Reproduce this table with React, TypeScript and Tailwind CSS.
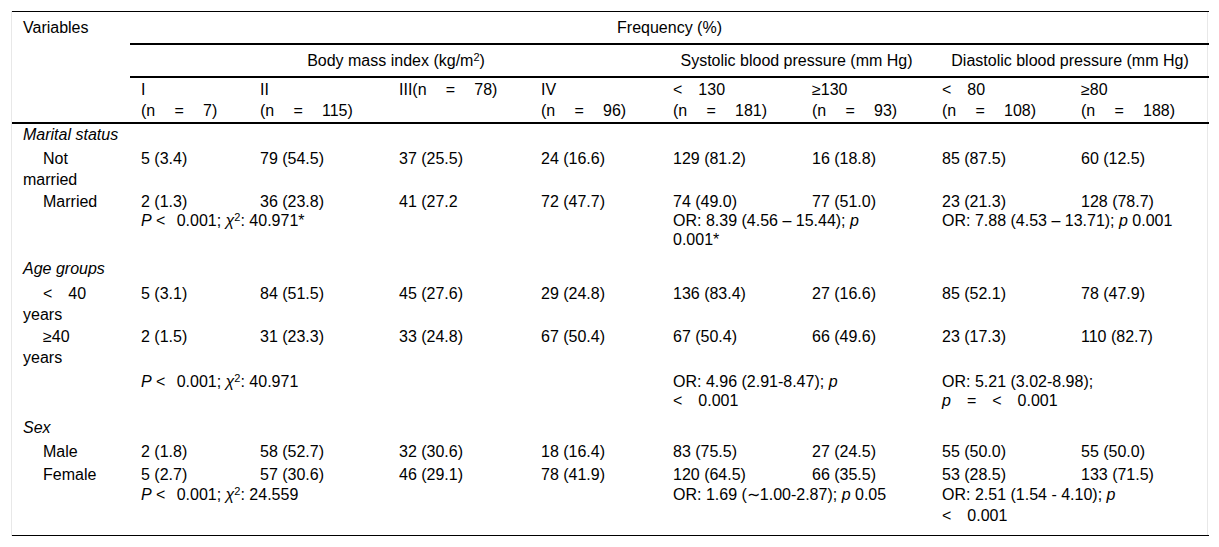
const EM = '\u2003';
const GAP = '\u2002\u2009';
const NGAP = '\u2003\u2009';

type Row = { label: React.ReactNode; values: string[]; pad?: string };

function Sup({ children }: { children: React.ReactNode }) {
  return <sup className="text-[11px]">{children}</sup>;
}

function Chi({ value }: { value: string }) {
  return (
    <>
      <i>P</i> &lt;{GAP}0.001; <i>χ</i>
      <Sup>2</Sup>: {value}
    </>
  );
}

function GroupHead({ title, pad = 'pt-0 pb-[2px]' }: { title: string; pad?: string }) {
  return (
    <tr>
      <td colSpan={9} className={`pl-[11px] italic ${pad}`}>
        {title}
      </td>
    </tr>
  );
}

function DataRow({ label, values, pad = 'pt-[3px] pb-[2px]' }: Row) {
  return (
    <tr>
      <td className={`pl-[11px] pr-2 indent-5 ${pad}`}>{label}</td>
      {values.map((v, i) => (
        <td key={i} className={`pl-[11px] ${pad}`}>
          {v}
        </td>
      ))}
    </tr>
  );
}

function StatRow({
  chi,
  sys,
  dia,
  pad,
}: {
  chi: React.ReactNode;
  sys: React.ReactNode;
  dia: React.ReactNode;
  pad: string;
}) {
  return (
    <tr>
      <td className={pad} />
      <td colSpan={4} className={`pl-[11px] ${pad}`}>
        {chi}
      </td>
      <td colSpan={2} className={`pl-[11px] ${pad}`}>
        {sys}
      </td>
      <td colSpan={2} className={`pl-[11px] ${pad}`}>
        {dia}
      </td>
    </tr>
  );
}

const nHeads: React.ReactNode[] = [
  <>I<br />(n{NGAP}={NGAP}7)</>,
  <>II<br />(n{NGAP}={NGAP}115)</>,
  <>III(n{NGAP}={NGAP}78)</>,
  <>IV<br />(n{NGAP}={NGAP}96)</>,
  <>&lt;{EM}130<br />(n{NGAP}={NGAP}181)</>,
  <>≥130<br />(n{NGAP}={NGAP}93)</>,
  <>&lt;{EM}80<br />(n{NGAP}={NGAP}108)</>,
  <>≥80<br />(n{NGAP}={NGAP}188)</>,
];

const widths = [118, 119, 139, 142, 132, 139, 130, 139, 139];

export default function App() {
  return (
    <div className="bg-white min-h-[547px] pt-[11px] text-black text-[16px] leading-[19px] font-['Liberation_Sans',Arial,sans-serif]">
      <div className="ml-[11px] w-[1197px] border-x border-[#e8e8e8]">
        <table className="w-full table-fixed border-separate border-spacing-0 border-t border-b border-black text-left">
          <colgroup>
            {widths.map((w, i) => (
              <col key={i} style={{ width: w }} />
            ))}
          </colgroup>
          <thead>
            <tr>
              <th
                rowSpan={3}
                className="align-top font-normal pl-[11px] pt-[6px] border-b-2 border-black"
              >
                Variables
              </th>
              <th colSpan={8} className="font-normal text-center pt-[6px] pb-[6px] border-b-2 border-black">
                Frequency (%)
              </th>
            </tr>
            <tr>
              <th colSpan={4} className="font-normal text-center pt-[6px] pb-[6px] border-b-2 border-black">
                Body mass index (kg/m<Sup>2</Sup>)
              </th>
              <th colSpan={2} className="font-normal text-center pt-[6px] pb-[6px] border-b-2 border-black">
                Systolic blood pressure (mm Hg)
              </th>
              <th colSpan={2} className="font-normal text-center pt-[6px] pb-[6px] border-b-2 border-black">
                Diastolic blood pressure (mm Hg)
              </th>
            </tr>
            <tr>
              {nHeads.map((h, i) => (
                <th key={i} className="align-top font-normal leading-[21px] pl-[11px] pt-[1px] pb-[1px] border-b-2 border-black">
                  {h}
                </th>
              ))}
            </tr>
          </thead>
          <tbody className="align-top">
            {/* Marital status */}
            <GroupHead title="Marital status" pad="pt-[1px] pb-[2px]" />
            <DataRow
              pad="pt-[2px] pb-[1px] leading-[21px]"
              label={<>Not<br />married</>}
              values={['5 (3.4)', '79 (54.5)', '37 (25.5)', '24 (16.6)', '129 (81.2)', '16 (18.8)', '85 (87.5)', '60 (12.5)']}
            />
            <DataRow
              pad="pt-[1px] pb-0"
              label="Married"
              values={['2 (1.3)', '36 (23.8)', '41 (27.2', '72 (47.7)', '74 (49.0)', '77 (51.0)', '23 (21.3)', '128 (78.7)']}
            />
            <StatRow
              pad="pt-0 pb-[10px]"
              chi={<Chi value="40.971*" />}
              sys={<>OR: 8.39 (4.56 – 15.44); <i>p</i><br />0.001*</>}
              dia={<>OR: 7.88 (4.53 – 13.71); <i>p</i> 0.001</>}
            />

            {/* Age groups */}
            <GroupHead title="Age groups" />
            <DataRow
              pad="pt-[3px] pb-0 leading-[21px]"
              label={<>&lt;{EM}40<br />years</>}
              values={['5 (3.1)', '84 (51.5)', '45 (27.6)', '29 (24.8)', '136 (83.4)', '27 (16.6)', '85 (52.1)', '78 (47.9)']}
            />
            <DataRow
              pad="pt-[1px] pb-0 leading-[21px]"
              label={<>≥40<br />years</>}
              values={['2 (1.5)', '31 (23.3)', '33 (24.8)', '67 (50.4)', '67 (50.4)', '66 (49.6)', '23 (17.3)', '110 (82.7)']}
            />
            <StatRow
              pad="pt-[4px] pb-[8px]"
              chi={<Chi value="40.971" />}
              sys={<>OR: 4.96 (2.91-8.47); <i>p</i><br />&lt;{EM}0.001</>}
              dia={<>OR: 5.21 (3.02-8.98);<br /><i>p</i>{EM}={EM}&lt;{EM}0.001</>}
            />

            {/* Sex */}
            <GroupHead title="Sex" />
            <DataRow
              label="Male"
              values={['2 (1.8)', '58 (52.7)', '32 (30.6)', '18 (16.4)', '83 (75.5)', '27 (24.5)', '55 (50.0)', '55 (50.0)']}
            />
            <DataRow
              pad="pt-[2px] pb-0"
              label="Female"
              values={['5 (2.7)', '57 (30.6)', '46 (29.1)', '78 (41.9)', '120 (64.5)', '66 (35.5)', '53 (28.5)', '133 (71.5)']}
            />
            <StatRow
              pad="pt-0 pb-[9px] leading-[21px]"
              chi={<Chi value="24.559" />}
              sys={<>OR: 1.69 (∼1.00-2.87); <i>p</i> 0.05</>}
              dia={<>OR: 2.51 (1.54 - 4.10); <i>p</i><br />&lt;{EM}0.001</>}
            />
          </tbody>
        </table>
      </div>
    </div>
  );
}
